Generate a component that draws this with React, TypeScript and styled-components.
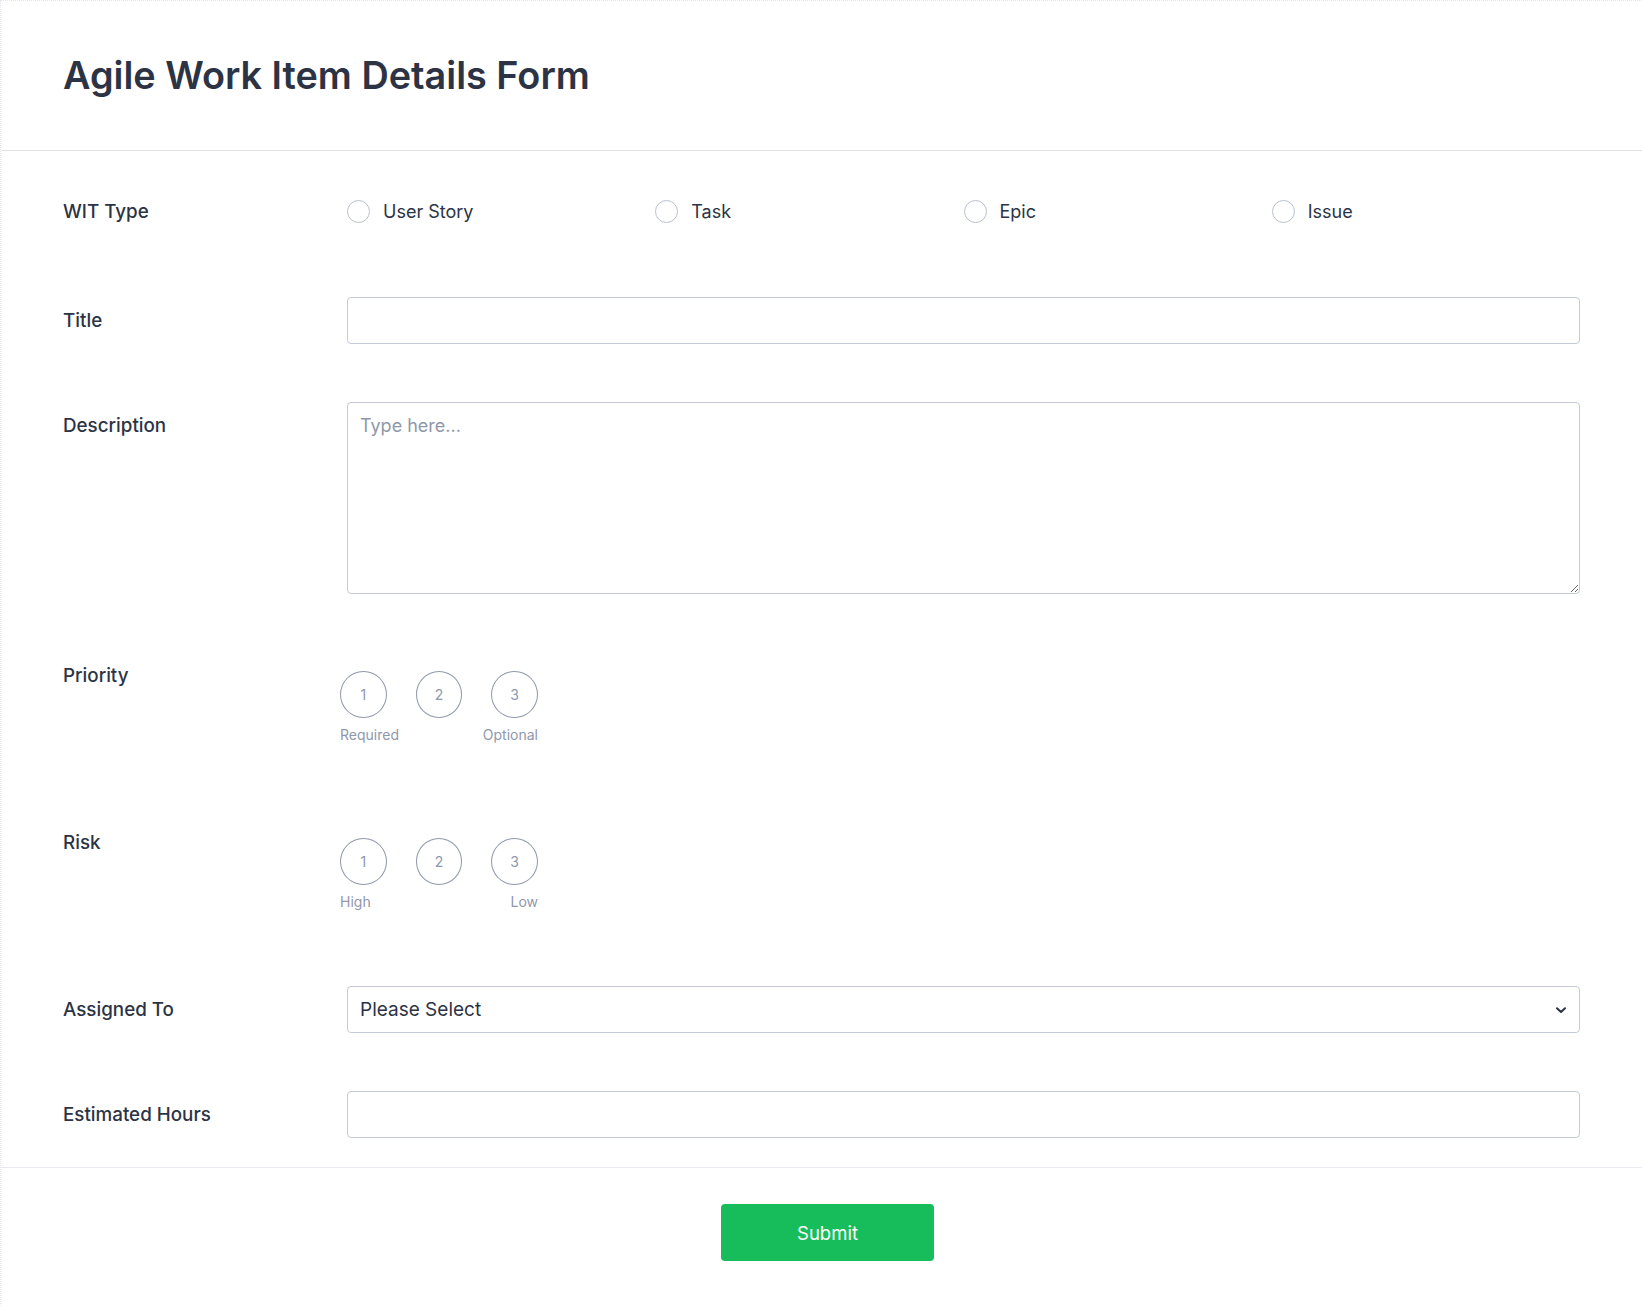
import React, { useState } from 'react';
import styled, { createGlobalStyle } from 'styled-components';

const GlobalStyle = createGlobalStyle`
  html, body {
    margin: 0;
    padding: 0;
    background: #ffffff;
  }
  * {
    box-sizing: border-box;
  }
  body {
    font-family: Inter, "Noto Sans", "Liberation Sans", sans-serif;
    color: #2c3345;
  }
`;

const FormCard = styled.form`
  width: 1642px;
  min-height: 1307px;
  background: #ffffff;
  border-top: 1px dotted #e4e6eb;
  border-left: 1px dotted #e4e6eb;
`;

const Header = styled.header`
  height: 150px;
  display: flex;
  align-items: center;
  padding: 0 62px 2px 62px;
  border-bottom: 1px solid #dfe2e8;
`;

const Title = styled.h1`
  margin: 0;
  font-size: 37.8px;
  font-weight: 600;
  letter-spacing: 0;
  color: #2c3345;
`;

const Body = styled.div`
  padding: 8px 0 0;
  border-bottom: 1px solid #e8e9f0;
`;

const Row = styled.div<{ $top?: number; $bottom?: number }>`
  display: grid;
  grid-template-columns: 284px 1fr;
  padding: ${p => p.$top ?? 29}px 62px ${p => p.$bottom ?? 29}px 62px;
`;

const Label = styled.label`
  font-size: 18.8px;
  font-weight: 500;
  line-height: 47px;
  color: #2c3345;
`;

const RadioGrid = styled.div`
  display: grid;
  grid-template-columns: repeat(4, 1fr);
  align-items: center;
  height: 47px;
`;

const RadioOption = styled.label`
  display: flex;
  align-items: center;
  gap: 13px;
  font-size: 18px;
  color: #2c3345;
  cursor: pointer;
`;

const RadioCircle = styled.span<{ $checked: boolean }>`
  width: 23px;
  height: 23px;
  border-radius: 50%;
  border: 1.5px solid #b9bfcc;
  background: #ffffff;
  display: flex;
  align-items: center;
  justify-content: center;

  &::after {
    content: '';
    width: 11px;
    height: 11px;
    border-radius: 50%;
    background: ${p => (p.$checked ? '#2e69ff' : 'transparent')};
  }
`;

const TextInput = styled.input`
  width: 100%;
  height: 47px;
  border: 1px solid #c3cad8;
  border-radius: 4px;
  padding: 0 12px;
  font-family: inherit;
  font-size: 18px;
  color: #2c3345;
  outline: none;
`;

const TextArea = styled.textarea`
  width: 100%;
  height: 192px;
  display: block;
  border: 1px solid #c3cad8;
  border-radius: 4px;
  padding: 10px 12px;
  font-family: inherit;
  font-size: 18px;
  line-height: 26px;
  color: #2c3345;
  outline: none;
  resize: vertical;

  &::placeholder {
    color: #8f98ab;
  }
`;

const Scale = styled.div`
  width: 198px;
  margin-left: -7px;
  padding: 19px 0 16px;
`;

const ScaleButtons = styled.div`
  display: flex;
  gap: 29px;
`;

const ScaleButton = styled.button<{ $active: boolean }>`
  width: 47px;
  height: 47px;
  border-radius: 50%;
  border: 1.5px solid ${p => (p.$active ? '#2e69ff' : '#8f98ab')};
  background: ${p => (p.$active ? '#2e69ff' : '#ffffff')};
  color: ${p => (p.$active ? '#ffffff' : '#8f98ab')};
  font-family: inherit;
  font-size: 14px;
  padding: 0;
  cursor: pointer;
`;

const ScaleLabels = styled.div`
  display: flex;
  justify-content: space-between;
  margin-top: 7px;
  font-size: 14px;
  line-height: 20px;
  color: #8f98ab;
`;

const SelectBox = styled.div`
  position: relative;
  height: 47px;
`;

const Select = styled.select`
  appearance: none;
  width: 100%;
  height: 47px;
  border: 1px solid #c3cad8;
  border-radius: 4px;
  background: #ffffff;
  padding: 0 40px 0 12px;
  font-family: inherit;
  font-size: 19px;
  color: #2c3345;
  outline: none;
`;

const Chevron = styled.svg`
  position: absolute;
  right: 12px;
  top: 50%;
  transform: translateY(-50%);
  pointer-events: none;
`;

const Footer = styled.div`
  display: flex;
  justify-content: center;
  padding: 36px 0 47px 12px;
`;

const SubmitButton = styled.button`
  width: 213px;
  height: 57px;
  border: none;
  border-radius: 4px;
  background: #18bd5b;
  color: #ffffff;
  font-family: inherit;
  font-size: 18.5px;
  font-weight: 400;
  cursor: pointer;
`;

const witTypes = ['User Story', 'Task', 'Epic', 'Issue'];

const ScaleField: React.FC<{ low: string; high: string }> = ({ low, high }) => {
  const [value, setValue] = useState<number | null>(null);
  return (
    <Scale>
      <ScaleButtons>
        {[1, 2, 3].map(n => (
          <ScaleButton key={n} type="button" $active={value === n} onClick={() => setValue(n)}>
            {n}
          </ScaleButton>
        ))}
      </ScaleButtons>
      <ScaleLabels>
        <span>{low}</span>
        <span>{high}</span>
      </ScaleLabels>
    </Scale>
  );
};

const App: React.FC = () => {
  const [witType, setWitType] = useState<string>('');

  return (
    <>
      <GlobalStyle />
      <FormCard onSubmit={e => e.preventDefault()}>
        <Header>
          <Title>Agile Work Item Details Form</Title>
        </Header>

        <Body>
          <Row $top={29} $bottom={33}>
            <Label>WIT Type</Label>
            <RadioGrid>
              {witTypes.map(t => (
                <RadioOption key={t} onClick={() => setWitType(t)}>
                  <RadioCircle $checked={witType === t} />
                  {t}
                </RadioOption>
              ))}
            </RadioGrid>
          </Row>

          <Row>
            <Label>Title</Label>
            <TextInput type="text" />
          </Row>

          <Row>
            <Label>Description</Label>
            <TextArea placeholder="Type here..." />
          </Row>

          <Row>
            <Label>Priority</Label>
            <ScaleField low="Required" high="Optional" />
          </Row>

          <Row>
            <Label>Risk</Label>
            <ScaleField low="High" high="Low" />
          </Row>

          <Row>
            <Label>Assigned To</Label>
            <SelectBox>
              <Select defaultValue="">
                <option value="">Please Select</option>
              </Select>
              <Chevron width="14" height="14" viewBox="0 0 14 14" fill="none">
                <path d="M3 5.2 L7 9 L11 5.2" stroke="#2c3345" strokeWidth="2" strokeLinecap="round" strokeLinejoin="round" />
              </Chevron>
            </SelectBox>
          </Row>

          <Row>
            <Label>Estimated Hours</Label>
            <TextInput type="number" />
          </Row>
        </Body>

        <Footer>
          <SubmitButton type="submit">Submit</SubmitButton>
        </Footer>
      </FormCard>
    </>
  );
};

export default App;
